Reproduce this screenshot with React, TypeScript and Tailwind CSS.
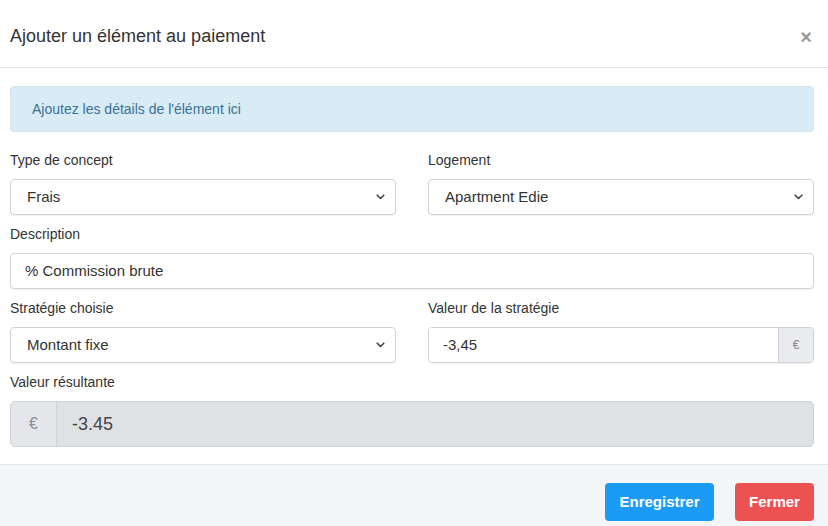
import React from "react";

const Chevron = () => (
  <svg width="9" height="6" viewBox="0 0 9 6" className="shrink-0">
    <path d="M1.2 1.2 L4.5 4.5 L7.8 1.2" fill="none" stroke="#444" strokeWidth="1.6" strokeLinecap="round" strokeLinejoin="round" />
  </svg>
);

const Label = ({ children }: { children: React.ReactNode }) => (
  <div className="h-[18px] leading-[18px] text-[14px] text-[#333] mb-[10px]">{children}</div>
);

const Select = ({ value }: { value: string }) => (
  <div className="h-[36px] flex items-center justify-between pl-[16px] pr-[10px] bg-white border border-[#cfd3d8] rounded-[4px] shadow-[0_1px_1px_rgba(0,0,0,0.06)] text-[15px] text-[#333]">
    <span>{value}</span>
    <Chevron />
  </div>
);

export default function App() {
  return (
    <div className="w-[828px] h-[526px] overflow-hidden bg-white flex flex-col" style={{ fontFamily: '"Liberation Sans", Arial, sans-serif' }}>
      <div className="h-[68px] shrink-0 flex items-center justify-between pl-[10px] pr-[16px] pt-[6px] border-b border-[#e6e6e6]">
        <span className="text-[18px] text-[#333]">Ajouter un élément au paiement</span>
        <span className="text-[20px] font-bold text-[#9a9a9a] leading-none">×</span>
      </div>
      <div className="pl-[10px] pr-[14px] pt-[18px] pb-[17px]">
        <div className="h-[46px] flex items-center pl-[21px] bg-[#d9ecf6] border border-[#cfe6f1] rounded-[4px] text-[14px] text-[#3a7197]">
          Ajoutez les détails de l'élément ici
        </div>
        <div className="grid grid-cols-2 gap-x-[32px] mt-[19px]">
          <div>
            <Label>Type de concept</Label>
            <Select value="Frais" />
          </div>
          <div>
            <Label>Logement</Label>
            <Select value="Apartment Edie" />
          </div>
        </div>
        <div className="mt-[10px]">
          <Label>Description</Label>
          <div className="h-[36px] flex items-center pl-[14px] bg-white border border-[#cfd3d8] rounded-[4px] shadow-[0_1px_1px_rgba(0,0,0,0.06)] text-[15px] text-[#333]">
            % Commission brute
          </div>
        </div>
        <div className="grid grid-cols-2 gap-x-[32px] mt-[10px]">
          <div>
            <Label>Stratégie choisie</Label>
            <Select value="Montant fixe" />
          </div>
          <div>
            <Label>Valeur de la stratégie</Label>
            <div className="h-[36px] flex border border-[#cfd3d8] rounded-[4px] shadow-[0_1px_1px_rgba(0,0,0,0.06)] overflow-hidden">
              <div className="flex-1 flex items-center pl-[14px] bg-white text-[15px] text-[#333]">-3,45</div>
              <div className="w-[35px] flex items-center justify-center bg-[#e9ebee] border-l border-[#cfd3d8] text-[12px] text-[#888]">€</div>
            </div>
          </div>
        </div>
        <div className="mt-[10px]">
          <Label>Valeur résultante</Label>
          <div className="h-[46px] flex border border-[#cdd2d7] rounded-[5px] overflow-hidden bg-[#dfe2e5]">
            <div className="w-[46px] flex items-center justify-center bg-[#e4e6e9] border-r border-[#cdd2d7] text-[16px] text-[#8a8f95]">€</div>
            <div className="flex-1 flex items-center pl-[15px] text-[18px] text-[#444]">-3.45</div>
          </div>
        </div>
      </div>
      <div className="flex-1 bg-[#f4f5f7] border-t border-[#e4e6e9] flex justify-end items-start gap-[21px] pt-[18px] pr-[14px]">
        <button className="h-[38px] w-[109px] rounded-[4px] bg-[#1b9bf5] text-white text-[15px] font-bold">Enregistrer</button>
        <button className="h-[38px] w-[79px] rounded-[4px] bg-[#ec5252] text-white text-[15px] font-bold">Fermer</button>
      </div>
    </div>
  );
}
